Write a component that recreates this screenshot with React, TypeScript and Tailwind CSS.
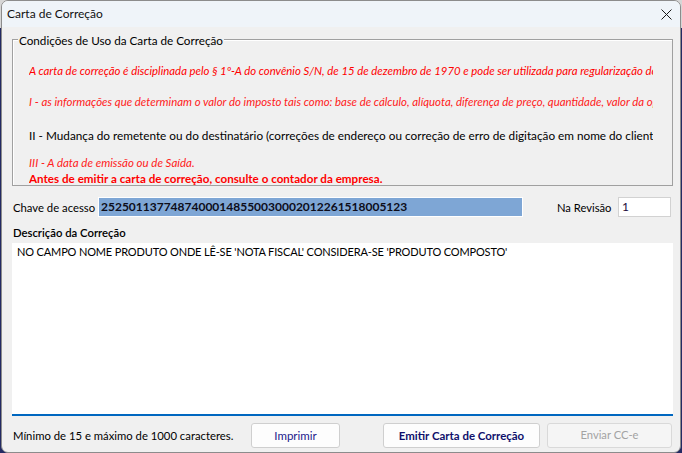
export default function App() {
  return (
    <div className="w-[682px] h-[453px] overflow-hidden bg-[linear-gradient(to_bottom,#d6d6d6_28px,#232a63_28px)] font-['Lato',sans-serif] text-[12px] text-black">
      <div className="ml-[1px] w-[680px] h-[453px] rounded-[7px] border border-[#8c8c8c] bg-[#f0f0f0] overflow-hidden flex flex-col">
        <div className="h-[26px] shrink-0 bg-[#eff4f9] flex items-center justify-between pl-[5px] pr-[8px]">
          <span className="text-[12px] leading-none text-[#111]">Carta de Correção</span>
          <svg width="11" height="11" viewBox="0 0 11 11" className="block">
            <path d="M0.5 0.5 L10.5 10.5 M10.5 0.5 L0.5 10.5" stroke="#1a1a1a" strokeWidth="1" fill="none" />
          </svg>
        </div>
        <div className="pl-[10px] flex flex-col">
          <div className="relative mt-[12px] w-[661px] h-[147px] border border-[#a0a0a0] shadow-[inset_1px_1px_0_#ffffff]">
            <span className="absolute left-[5px] top-[-8px] px-px bg-[#f0f0f0] leading-[16px] text-[11.7px] whitespace-nowrap">
              Condições de Uso da Carta de Correção
            </span>
            <div className="ml-[16px] w-[624px] overflow-hidden whitespace-nowrap pt-[23px] flex flex-col">
              <div className="leading-[16px] italic text-[11.37px] text-[#ff0000]">
                A carta de correção é disciplinada pelo § 1º-A do convênio S/N, de 15 de dezembro de 1970 e pode ser utilizada para regularização de erro ocorrido na emissão de documento fiscal, desde que o erro não esteja relacionado com:
              </div>
              <div className="mt-[15px] leading-[16px] italic text-[11.42px] text-[#ff2020]">
                I - as informações que determinam o valor do imposto tais como: base de cálculo, alíquota, diferença de preço, quantidade, valor da operação ou da prestação;
              </div>
              <div className="mt-[18px] leading-[16px] text-[11.75px] text-black">
                II - Mudança do remetente ou do destinatário (correções de endereço ou correção de erro de digitação em nome do cliente são permitidas);
              </div>
              <div className="mt-[11px] leading-[16px] italic text-[11.5px] text-[#ff2020]">
                III - A data de emissão ou de Saída.
              </div>
              <div className="mt-[1px] leading-[14px] font-bold text-[11.65px] text-[#ff0000]">
                Antes de emitir a carta de correção, consulte o contador da empresa.
              </div>
            </div>
          </div>

          <div className="mt-[11px] h-[20px] flex items-center">
            <span className="ml-[1px] w-[85px] leading-[16px] pt-[2px] text-[11.3px] whitespace-nowrap">Chave de acesso</span>
            <div className="w-[425px] h-[20px] border border-white bg-[#7ea6d5] pl-[2px] flex items-center font-bold text-[12px] text-[#0d0d1a] whitespace-nowrap">
              25250113774874000148550030002012261518005123
            </div>
            <span className="ml-[34px] w-[61px] leading-[16px] pt-[1px] text-[11.2px] whitespace-nowrap">Na Revisão</span>
            <div className="w-[53px] h-[20px] border border-[#d2d2d2] bg-white pl-[3px] flex items-center text-[#1a0a3a]">
              1
            </div>
          </div>

          <div className="mt-[9px] ml-[1px] leading-[14px] font-semibold text-[11.3px]">Descrição da Correção</div>

          <div className="mt-[3px] w-[661px] h-[173px] bg-white border-b-2 border-[#0067c0] pl-[5px] pt-[1px]">
            <div className="leading-[16px] text-[11px] tracking-[-0.15px] whitespace-nowrap">NO CAMPO NOME PRODUTO ONDE LÊ-SE 'NOTA FISCAL' CONSIDERA-SE 'PRODUTO COMPOSTO'</div>
          </div>

          <div className="mt-[7px] h-[25px] flex items-center">
            <span className="ml-[1px] w-[238px] leading-[16px] text-[11.3px] whitespace-nowrap">Mínimo de 15 e máximo de 1000 caracteres.</span>
            <button className="w-[89px] h-[25px] rounded-[3px] border border-[#cfcfcf] bg-[#fdfdfd] text-[11.5px] text-[#231a8c] flex items-center justify-center">
              Imprimir
            </button>
            <button className="ml-[43px] w-[157px] h-[25px] rounded-[3px] border border-[#cfcfcf] bg-[#fdfdfd] text-[11.45px] font-bold text-[#0f0f6b] flex items-center justify-center whitespace-nowrap">
              Emitir Carta de Correção
            </button>
            <button className="ml-[7px] w-[125px] h-[25px] rounded-[3px] border border-[#d9d9d9] bg-[#f5f5f5] text-[11.2px] text-[#a3a3a3] flex items-center justify-center">
              Enviar CC-e
            </button>
          </div>
        </div>
      </div>
    </div>
  );
}
